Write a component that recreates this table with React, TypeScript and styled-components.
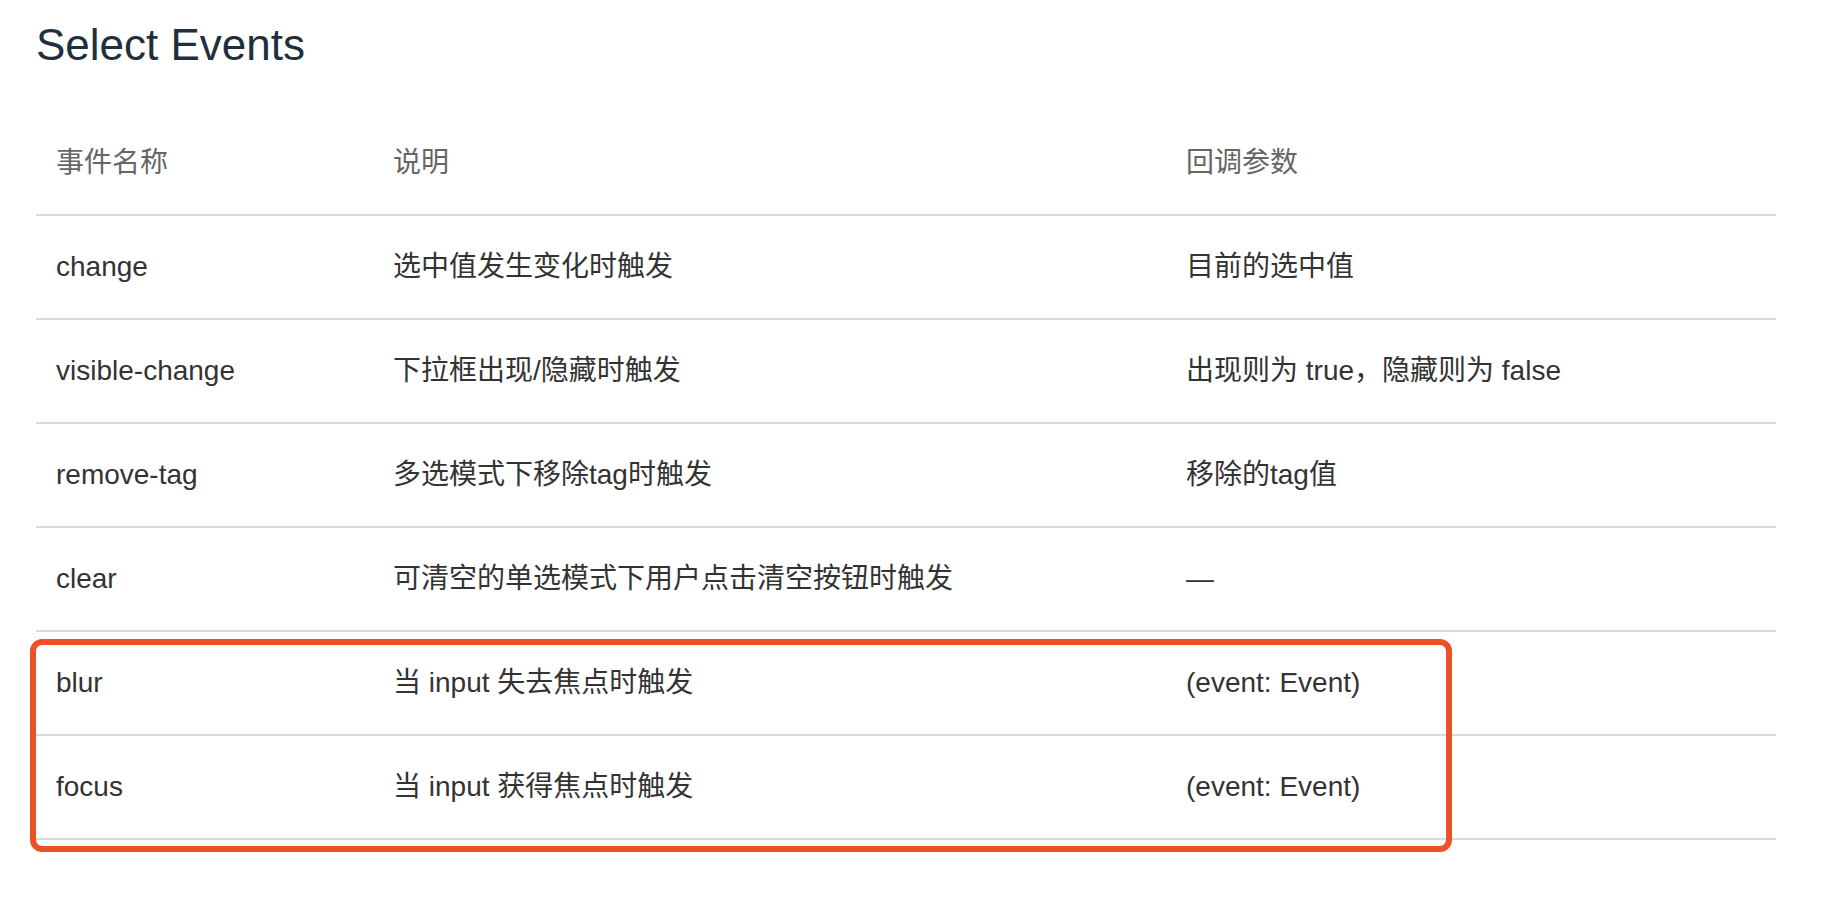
import React from "react";
import styled, { createGlobalStyle } from "styled-components";

const GlobalStyle = createGlobalStyle`
  html, body {
    margin: 0;
    padding: 0;
    background: #ffffff;
  }
  body {
    font-family: "Liberation Sans", "Noto Sans CJK SC", sans-serif;
  }
`;

const Page = styled.div`
  padding: 20px 62px 68px 36px;
  box-sizing: border-box;
  width: 1838px;
  min-height: 920px;
`;

const Title = styled.h3`
  margin: 0 0 42px 0;
  font-size: 44px;
  line-height: 50px;
  font-weight: 400;
  color: #1f2f3d;
`;

const TableWrap = styled.div`
  position: relative;
  width: 1740px;
  padding-bottom: 20px;
`;

const Table = styled.table`
  width: 1740px;
  border-collapse: collapse;
  table-layout: fixed;
  font-size: 28px;
  line-height: 42px;
`;

const HeadCell = styled.th`
  text-align: left;
  font-weight: 400;
  color: #666666;
  padding: 30px 20px;
  border-bottom: 2px solid #d9d9d9;
  white-space: nowrap;
`;

const Cell = styled.td`
  text-align: left;
  color: #333333;
  padding: 30px 20px;
  border-bottom: 2px solid #d9d9d9;
  white-space: nowrap;
`;

const Highlight = styled.div`
  position: absolute;
  left: -6px;
  top: 527px;
  width: 1422px;
  height: 213px;
  box-sizing: border-box;
  border: 6px solid #ec5128;
  border-radius: 12px;
  pointer-events: none;
`;

const rows: [string, string, string][] = [
  ["change", "选中值发生变化时触发", "目前的选中值"],
  ["visible-change", "下拉框出现/隐藏时触发", "出现则为 true，隐藏则为 false"],
  ["remove-tag", "多选模式下移除tag时触发", "移除的tag值"],
  ["clear", "可清空的单选模式下用户点击清空按钮时触发", "—"],
  ["blur", "当 input 失去焦点时触发", "(event: Event)"],
  ["focus", "当 input 获得焦点时触发", "(event: Event)"],
];

export default function App() {
  return (
    <>
      <GlobalStyle />
      <Page>
        <Title>Select Events</Title>
        <TableWrap>
          <Table>
            <colgroup>
              <col style={{ width: 337 }} />
              <col style={{ width: 793 }} />
              <col style={{ width: 610 }} />
            </colgroup>
            <thead>
              <tr>
                <HeadCell>事件名称</HeadCell>
                <HeadCell>说明</HeadCell>
                <HeadCell>回调参数</HeadCell>
              </tr>
            </thead>
            <tbody>
              {rows.map((r) => (
                <tr key={r[0]}>
                  <Cell>{r[0]}</Cell>
                  <Cell>{r[1]}</Cell>
                  <Cell>{r[2]}</Cell>
                </tr>
              ))}
            </tbody>
          </Table>
          <Highlight />
        </TableWrap>
      </Page>
    </>
  );
}
